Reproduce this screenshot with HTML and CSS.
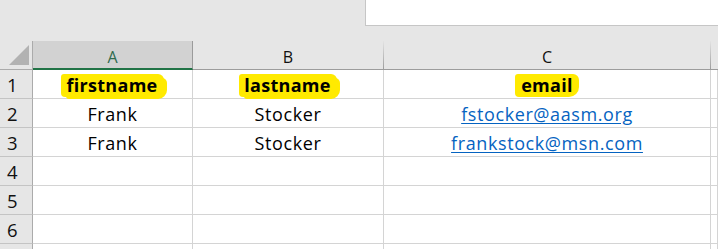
FILE: index.html
```html
<!DOCTYPE html>
<html lang="en">

<head>
    <meta charset="UTF-8" />
    <meta name="viewport" content="width=device-width, initial-scale=1.0" />
    <title>Contacts sheet</title>
    <link rel="stylesheet" href="styles.css">
</head>

<body>
    <div class="topbar">
        <div class="formula-box"></div>
    </div>

    <div class="sheet">
        <div class="corner">
            <svg width="22" height="22" viewBox="0 0 22 22">
                <polygon points="21,1 21,21 1,21" fill="#b2b2b2" />
            </svg>
        </div>
        <div class="col-head selected">A</div>
        <div class="col-head">B</div>
        <div class="col-head">C</div>
        <div class="col-head last"></div>

        <div class="row-head">1</div>
        <div class="cell"><span class="mark mark-first">firstname</span></div>
        <div class="cell"><span class="mark mark-last">lastname</span></div>
        <div class="cell"><span class="mark mark-email">email</span></div>
        <div class="cell"></div>

        <div class="row-head">2</div>
        <div class="cell">Frank</div>
        <div class="cell">Stocker</div>
        <div class="cell"><a href="#">fstocker@aasm.org</a></div>
        <div class="cell"></div>

        <div class="row-head">3</div>
        <div class="cell">Frank</div>
        <div class="cell">Stocker</div>
        <div class="cell"><a href="#">frankstock@msn.com</a></div>
        <div class="cell"></div>

        <div class="row-head">4</div>
        <div class="cell"></div>
        <div class="cell"></div>
        <div class="cell"></div>
        <div class="cell"></div>

        <div class="row-head">5</div>
        <div class="cell"></div>
        <div class="cell"></div>
        <div class="cell"></div>
        <div class="cell"></div>

        <div class="row-head">6</div>
        <div class="cell"></div>
        <div class="cell"></div>
        <div class="cell"></div>
        <div class="cell"></div>

        <div class="row-head"></div>
        <div class="cell"></div>
        <div class="cell"></div>
        <div class="cell"></div>
        <div class="cell"></div>
    </div>
</body>

</html>
```

FILE: styles.css
```css
* {
    box-sizing: border-box;
}

body {
    margin: 0;
    width: 718px;
    height: 249px;
    overflow: hidden;
    background: #e6e6e6;
    font-family: 'Open Sans', 'Liberation Sans', sans-serif;
    color: #000;
}

.topbar {
    height: 41px;
    display: flex;
    justify-content: flex-end;
}

.formula-box {
    width: 353px;
    height: 26px;
    background: #fff;
    border-left: 1px solid #c6c6c6;
    border-bottom: 1px solid #c6c6c6;
}

.sheet {
    display: grid;
    grid-template-columns: 33px 160px 191px 327px 1fr;
    grid-auto-rows: 29px;
    background: #fff;
}

.corner {
    background: #e6e6e6;
    border-right: 1px solid #ababab;
    border-bottom: 1px solid #ababab;
    display: flex;
    align-items: flex-end;
    justify-content: flex-end;
    padding: 0 2px 3px 0;
}

.col-head {
    background: #e6e6e6;
    border-bottom: 1px solid #9b9b9b;
    border-right: 1px solid;
    border-image: linear-gradient(#e6e6e6, #9b9b9b) 1;
    border-top: 0;
    border-left: 0;
    display: flex;
    align-items: flex-end;
    justify-content: center;
    font-size: 16px;
    line-height: 20px;
    padding-bottom: 2px;
    color: #111;
}

.col-head.selected {
    background: #d2d2d2;
    color: #2f6b4e;
    border-image: none;
    border-right: 1px solid #9b9b9b;
    border-bottom: 2px solid #217346;
    padding-bottom: 1px;
}

.col-head.last {
    border-image: none;
    border-right: 0;
}

.row-head {
    background: #e6e6e6;
    border-right: 1px solid #ababab;
    border-bottom: 1px solid #c4c4c4;
    display: flex;
    align-items: flex-end;
    padding: 0 0 1px 7px;
    font-size: 18.5px;
    line-height: 24px;
    color: #111;
}

.cell {
    border-right: 1px solid #d4d4d4;
    border-bottom: 1px solid #d4d4d4;
    display: flex;
    align-items: flex-end;
    justify-content: center;
    font-size: 18px;
    letter-spacing: 0.6px;
    line-height: 24px;
    padding-bottom: 1px;
}

.cell a {
    color: #0563c1;
    text-decoration: underline;
    text-underline-offset: 2px;
}

.mark {
    font-weight: bold;
    letter-spacing: 0.3px;
    background: #ffea00;
    padding: 0 6px 1px 5px;
    line-height: 22px;
    border-radius: 3px 6px 10px 4px;
    box-shadow: 4px 3px 0 -1px #ffea00;
}

.mark-email {
    padding: 0 6px 1px 6px;
    box-shadow: none;
}
```
